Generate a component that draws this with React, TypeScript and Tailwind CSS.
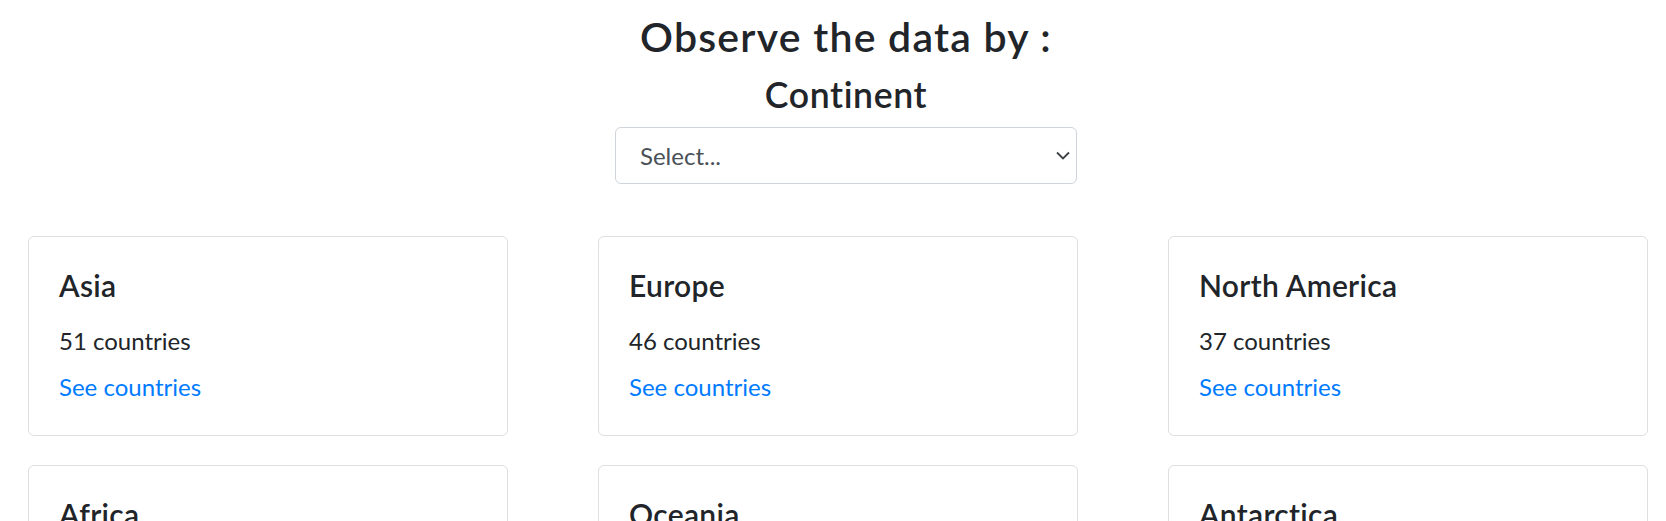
import { useState } from "react"

const continents = [
  { name: "Asia", count: 51 },
  { name: "Europe", count: 46 },
  { name: "North America", count: 37 },
  { name: "Africa", count: 58 },
  { name: "Oceania", count: 27 },
  { name: "Antarctica", count: 5 },
  { name: "South America", count: 14 },
]

function ContinentCard({ name, count }: { name: string; count: number }) {
  return (
    <div className="w-[480px] rounded-[6px] border border-[#dfdfdf] bg-white p-[30px]">
      <h5 className="mb-[20px] text-[30px] leading-[36px] font-semibold tracking-[0.01em] text-[#212529]">{name}</h5>
      <p className="mb-[10px] text-[24px] leading-[36px] text-[#212529]">{count} countries</p>
      <a href="#" className="block text-[24px] leading-[36px] text-[#007bff] no-underline hover:underline">
        See countries
      </a>
    </div>
  )
}

export default function App() {
  const [continent, setContinent] = useState("")

  return (
    <div className="min-h-screen bg-white font-['Segoe_UI','Lato',sans-serif] text-[#212529]">
      <div className="flex flex-col items-center pt-[12px] pl-[26px]">
        <h3 className="mb-[12px] text-[41px] leading-[49px] font-semibold tracking-[0.03em]">Observe the data by :</h3>
        <h4 className="mb-[11px] text-[35.6px] leading-[43px] font-semibold tracking-[0.018em]">Continent</h4>
        <div className="relative w-[462px]">
          <select
            value={continent}
            onChange={(e) => setContinent(e.target.value)}
            className="h-[57px] w-full appearance-none rounded-[6px] border border-[#ced4da] bg-white pl-[24px] pr-[30px] text-[24px] text-[#495057] outline-none"
          >
            <option value="">Select...</option>
            <option value="asia">Asia</option>
            <option value="europe">Europe</option>
            <option value="north-america">North America</option>
            <option value="africa">Africa</option>
            <option value="oceania">Oceania</option>
            <option value="antarctica">Antarctica</option>
            <option value="south-america">South America</option>
          </select>
          <svg
            className="pointer-events-none absolute right-[7px] top-[24px]"
            width="14"
            height="9"
            viewBox="0 0 14 9"
            fill="none"
          >
            <path d="M1 1.5l6 6 6-6" stroke="#3c4043" strokeWidth="1.8" />
          </svg>
        </div>
      </div>

      <div className="mt-[52px] grid grid-cols-[480px_480px_480px] gap-x-[90px] gap-y-[29px] pl-[28px]">
        {continents.map((c) => (
          <ContinentCard key={c.name} name={c.name} count={c.count} />
        ))}
      </div>
    </div>
  )
}
